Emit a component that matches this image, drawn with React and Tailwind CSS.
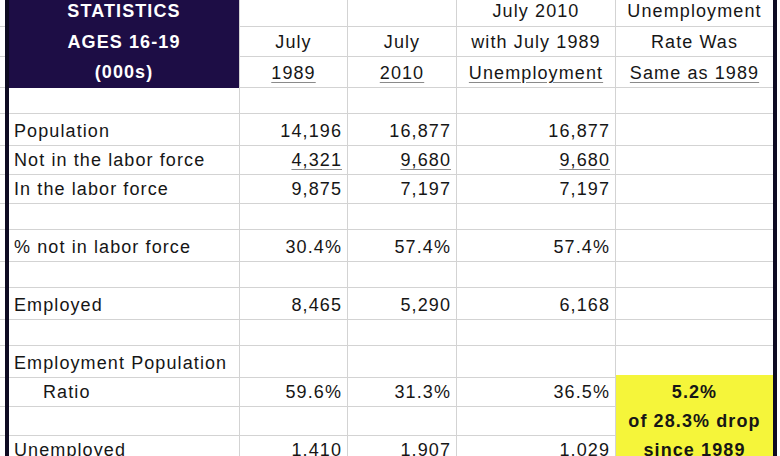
const rows = [
  { h: 'h-[31px]', label: 'STATISTICS', head: true, pad: 'pt-0', c: ['', '', 'July 2010', 'Unemployment'] },
  { label: 'AGES 16-19', head: true, pad: 'pt-[2px]', c: ['July', 'July', 'with July 1989', 'Rate Was'] },
  { label: '(000s)', head: true, pad: 'pt-[4px]', c: ['1989', '2010', 'Unemployment', 'Same as 1989'], u: [0, 1, 2, 3] },
  { label: '', c: ['', '', '', ''] },
  { label: 'Population', c: ['14,196', '16,877', '16,877', ''] },
  { label: 'Not in the labor force', c: ['4,321', '9,680', '9,680', ''], u: [0, 1, 2] },
  { label: 'In the labor force', c: ['9,875', '7,197', '7,197', ''] },
  { label: '', c: ['', '', '', ''] },
  { label: '% not in labor force', c: ['30.4%', '57.4%', '57.4%', ''] },
  { label: '', c: ['', '', '', ''] },
  { label: 'Employed', c: ['8,465', '5,290', '6,168', ''] },
  { label: '', c: ['', '', '', ''] },
  { label: 'Employment Population', c: ['', '', '', ''] },
  { label: 'Ratio', indent: true, c: ['59.6%', '31.3%', '36.5%', '5.2%'], hi: true },
  { label: '', c: ['', '', '', 'of 28.3% drop'], hi: true },
  { label: 'Unemployed', c: ['1,410', '1,907', '1,029', 'since 1989'], hi: true },
];

const line = 'border-b border-[#d3d3d3]';

function Cell({ children, pad = 'pt-[4px]', className = '' }) {
  return <div className={`flex items-center px-[5px] ${pad} ${line} ${className}`}>{children}</div>;
}

export default function App() {
  return (
    <div
      className="w-[780px] h-[456px] overflow-hidden bg-white text-[18px] tracking-[1.1px] text-[#161616]"
      style={{ fontFamily: '"Liberation Sans", Arial, sans-serif' }}
    >
      <div className="-mt-[4px]">
        {rows.map((r, i) => {
          const isU = (k) => r.u && r.u.includes(k);
          const hdr = r.head;
          return (
            <div
              key={i}
              className={`grid grid-cols-[5px_4px_231px_108px_109px_159px_157px_4px_3px] ${r.h || 'h-[29px]'}`}
            >
              <div className={line} />
              <div className="bg-[#0e0b22]" />
              {hdr ? (
                <div className={`flex items-center justify-center bg-[#1d0d45] text-white font-bold border-r border-[#d3d3d3] ${i === 0 ? 'pt-0' : 'pt-[1px]'}`}>
                  {r.label}
                </div>
              ) : (
                <Cell className={`border-r ${r.indent ? 'pl-[34px]' : ''}`}>{r.label}</Cell>
              )}
              {r.c.map((t, k) => {
                const yellow = r.hi && k === 3;
                return (
                  <Cell
                    key={k}
                    pad={hdr ? r.pad : 'pt-[4px]'}
                    className={`${k < 3 ? 'border-r' : ''} ${hdr || yellow ? 'justify-center' : 'justify-end'} ${
                      yellow ? 'bg-[#f5f53a] font-bold border-[#dede6a]' : ''
                    }`}
                  >
                    <span className={isU(k) ? 'underline decoration-[#8a8a8a] underline-offset-[3px]' : ''}>{t}</span>
                  </Cell>
                );
              })}
              <div className="bg-[#0e0b22]" />
              <div />
            </div>
          );
        })}
      </div>
    </div>
  );
}
